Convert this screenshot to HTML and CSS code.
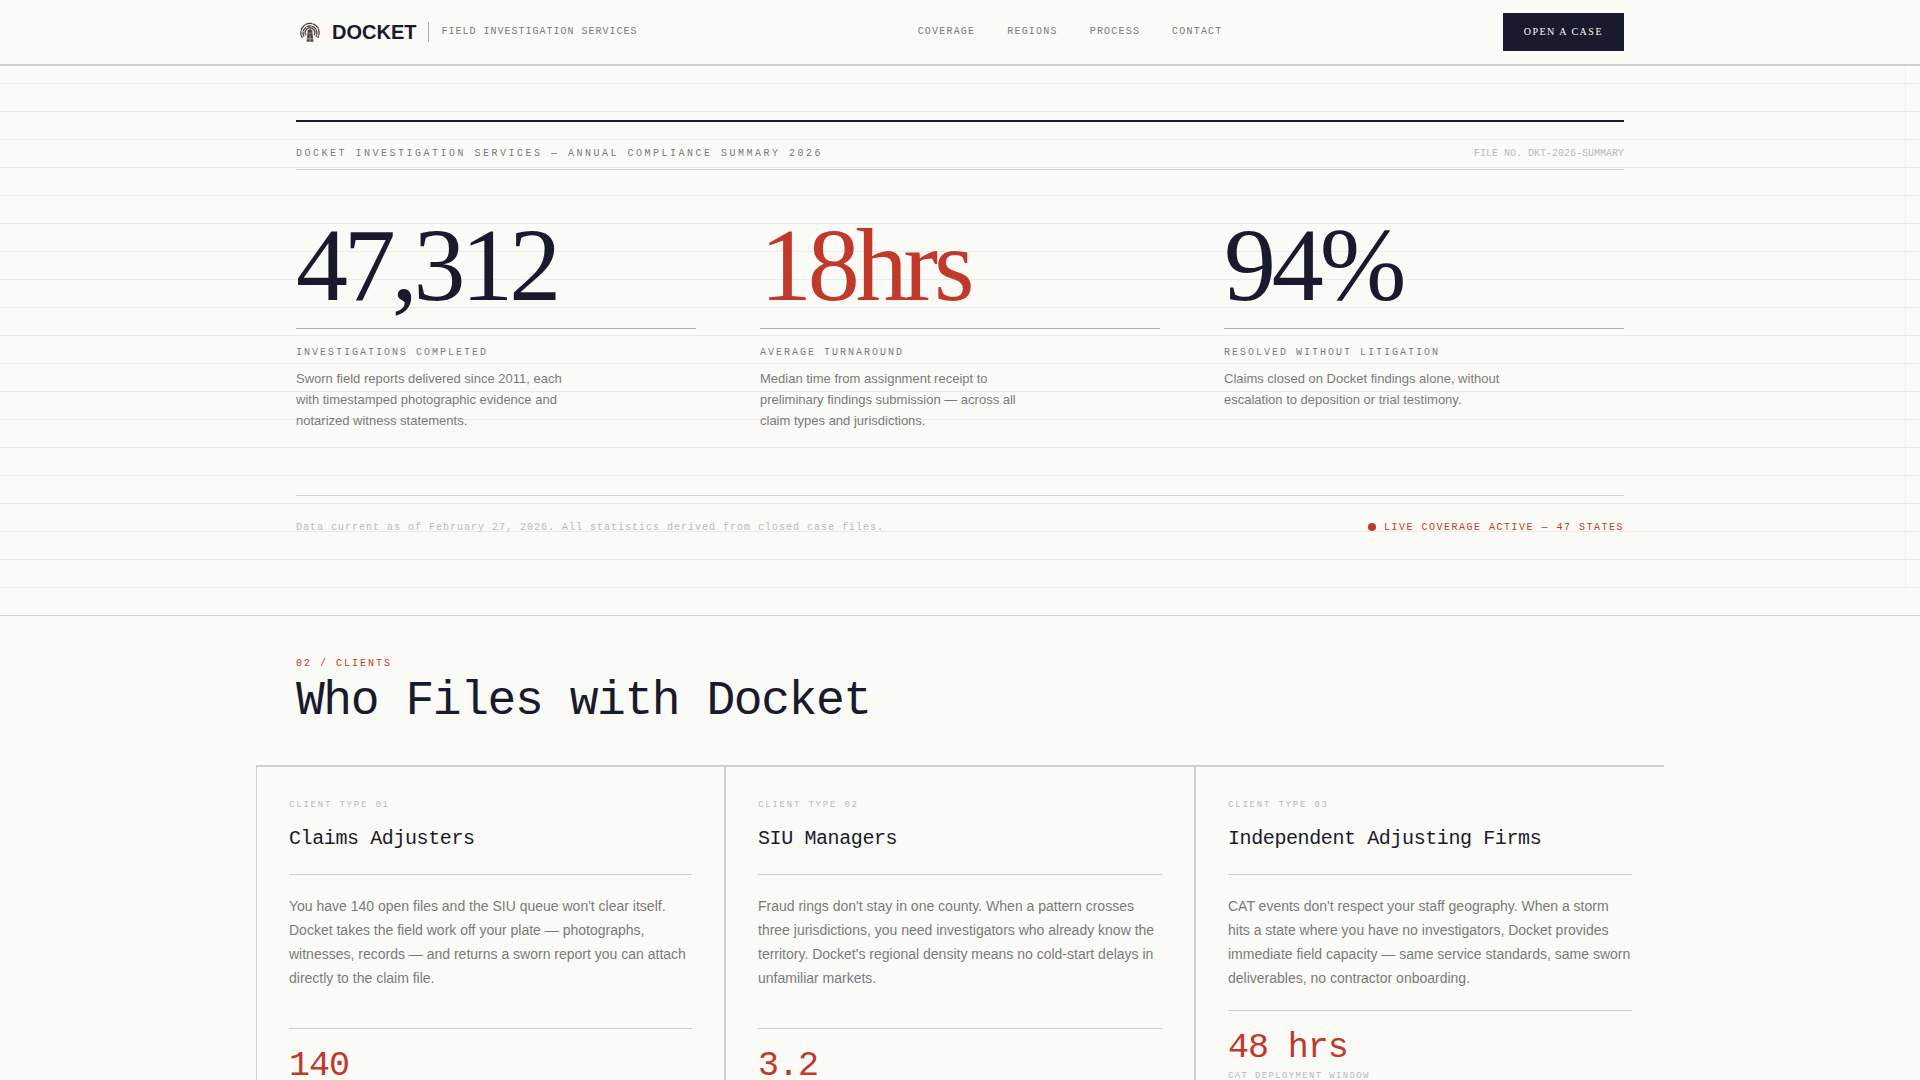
FILE: index.html
```html
<!DOCTYPE html>
<html lang="en">
<head>
<meta charset="utf-8">
<meta name="viewport" content="width=device-width, initial-scale=1">
<title>Docket — Field Investigation Services</title>
<link rel="stylesheet" href="styles.css">
</head>
<body>
<header class="site-header">
  <div class="container site-header__inner">
    <div class="brand">
      <a class="brand__link" href="#top">
        <svg class="brand__mark" viewBox="0 0 28 28" fill="none" aria-hidden="true">
          <g stroke="currentColor" stroke-width="1.3">
            <path d="M6.4 19.8A9.2 9.2 0 1 1 21.6 19.8" stroke-dasharray="7 .5"/>
            <path d="M8 18.6A7 7 0 1 1 20 18.6" stroke-dasharray="5 .5"/>
            <path d="M9.9 17.2A4.8 4.8 0 1 1 18.1 17.2"/>
          </g>
          <path fill="currentColor" d="M14 11.2a2.6 2.6 0 0 1 2.4 3.6l.8 6.4.2 2.6h-6.8l.2-2.6.8-6.4a2.6 2.6 0 0 1 2.4-3.6z"/>
          <path stroke="#fafaf7" stroke-width=".6" d="M12.6 15.2h2.8M11 20.8h6M14 17.5v2.2M14 21.4v2.4"/>
        </svg>
        <span class="brand__name">DOCKET</span>
      </a>
      <span class="brand__tag">FIELD INVESTIGATION SERVICES</span>
    </div>
    <nav class="site-nav" aria-label="Main">
      <a href="#coverage">COVERAGE</a>
      <a href="#regions">REGIONS</a>
      <a href="#process">PROCESS</a>
      <a href="#contact">CONTACT</a>
    </nav>
    <button class="case-button" type="button">OPEN A CASE</button>
  </div>
</header>

<main id="top">
  <section class="hero">
    <div class="container">
      <div class="summary-head">
        <span class="summary-head__title">DOCKET INVESTIGATION SERVICES — ANNUAL COMPLIANCE SUMMARY 2026</span>
        <span class="summary-head__file">FILE NO. DKT-2026-SUMMARY</span>
      </div>
      <div class="stats">
        <article class="stat">
          <div class="stat__value">47,312</div>
          <h2 class="stat__label">INVESTIGATIONS COMPLETED</h2>
          <p class="stat__text">Sworn field reports delivered since 2011, each with timestamped photographic evidence and notarized witness statements.</p>
        </article>
        <article class="stat">
          <div class="stat__value stat__value--accent">18hrs</div>
          <h2 class="stat__label">AVERAGE TURNAROUND</h2>
          <p class="stat__text">Median time from assignment receipt to preliminary findings submission — across all claim types and jurisdictions.</p>
        </article>
        <article class="stat">
          <div class="stat__value">94%</div>
          <h2 class="stat__label">RESOLVED WITHOUT LITIGATION</h2>
          <p class="stat__text">Claims closed on Docket findings alone, without escalation to deposition or trial testimony.</p>
        </article>
      </div>
      <div class="summary-foot">
        <span class="summary-foot__note">Data current as of February 27, 2026. All statistics derived from closed case files.</span>
        <span class="live">LIVE COVERAGE ACTIVE — 47 STATES</span>
      </div>
    </div>
  </section>

  <section class="clients">
    <div class="container clients__head">
      <span class="clients__index">02 / CLIENTS</span>
      <h2 class="clients__title">Who Files with Docket</h2>
    </div>
    <div class="client-grid">
      <article class="client">
        <span class="client__type">CLIENT TYPE 01</span>
        <h3 class="client__name">Claims Adjusters</h3>
        <p class="client__text">You have 140 open files and the SIU queue won't clear itself. Docket takes the field work off your plate — photographs, witnesses, records — and returns a sworn report you can attach directly to the claim file.</p>
        <div class="client__stat">
          <div class="client__value">140</div>
        </div>
      </article>
      <article class="client">
        <span class="client__type">CLIENT TYPE 02</span>
        <h3 class="client__name">SIU Managers</h3>
        <p class="client__text">Fraud rings don't stay in one county. When a pattern crosses three jurisdictions, you need investigators who already know the territory. Docket's regional density means no cold-start delays in unfamiliar markets.</p>
        <div class="client__stat">
          <div class="client__value">3.2</div>
        </div>
      </article>
      <article class="client">
        <span class="client__type">CLIENT TYPE 03</span>
        <h3 class="client__name">Independent Adjusting Firms</h3>
        <p class="client__text">CAT events don't respect your staff geography. When a storm hits a state where you have no investigators, Docket provides immediate field capacity — same service standards, same sworn deliverables, no contractor onboarding.</p>
        <div class="client__stat">
          <div class="client__value">48 hrs</div>
          <div class="client__unit">CAT DEPLOYMENT WINDOW</div>
        </div>
      </article>
    </div>
  </section>
</main>
</body>
</html>
```
FILE: styles.css
```css
:root {
  --paper: #fafaf7;
  --ink: #1a1a2e;
  --text: #7a7a7a;
  --faint: #bbbbb6;
  --rule: #d0d0cb;
  --rule-strong: #b0b0a8;
  --red: #c0392b;
  --sans: "Liberation Sans", Arial, sans-serif;
  --serif: "Liberation Serif", "Times New Roman", serif;
  --mono: "Liberation Mono", "Courier New", monospace;
}

*,
*::before,
*::after {
  box-sizing: border-box;
}

body {
  margin: 0;
  background: var(--paper);
  color: var(--text);
  font-family: var(--sans);
}

h2,
h3,
p {
  margin: 0;
  font-weight: 400;
}

a {
  color: inherit;
  text-decoration: none;
}

.container {
  max-width: 1408px;
  margin: 0 auto;
  padding: 0 40px;
}

/* Header */

.site-header {
  background: var(--paper);
  border-bottom: 2px solid var(--rule);
}

.site-header__inner {
  display: flex;
  align-items: center;
  justify-content: space-between;
  min-height: 64px;
}

.brand,
.brand__link {
  display: flex;
  align-items: center;
}

.brand {
  gap: 12px;
}

.brand__link {
  gap: 8px;
}

.brand__mark {
  width: 28px;
  height: 28px;
  color: #54413f;
}

.brand__name {
  color: var(--ink);
  font-size: 20px;
  font-weight: 700;
}

.brand__tag {
  padding-left: 12px;
  border-left: 1px solid var(--rule-strong);
  font: 10px/20px var(--mono);
  letter-spacing: 0.1em;
}

.site-nav {
  display: flex;
  gap: 32px;
  font: 10px/20px var(--mono);
  letter-spacing: 0.12em;
}

.case-button {
  padding: 11px 20px;
  border: 1px solid var(--ink);
  background: var(--ink);
  color: var(--paper);
  font: 10px/14px var(--serif);
  letter-spacing: 0.15em;
}

/* Hero */

.hero {
  position: relative;
  padding: 54px 0 80px;
  border-bottom: 1px solid var(--rule);
  background: repeating-linear-gradient(to bottom, transparent 0 27px, #ebebe8 27px 28px) 0 -10px / 100% 588px no-repeat;
}

.hero::after {
  content: "";
  position: absolute;
  top: 0;
  right: 14px;
  bottom: 26px;
  width: 1px;
  background: #f4f0ed;
}

.summary-head,
.summary-foot {
  display: flex;
  justify-content: space-between;
  padding-top: 24px;
  font: 10px/15px var(--mono);
}

.summary-head {
  padding-bottom: 8px;
  border-top: 2px solid var(--ink);
  border-bottom: 1px solid var(--rule);
}

.summary-head__title {
  letter-spacing: 0.25em;
}

.summary-head__file,
.summary-foot__note {
  color: var(--faint);
}

.stats {
  display: grid;
  grid-template-columns: repeat(3, 1fr);
  gap: 64px;
  padding: 48px 0 64px;
}

.stat__value {
  color: var(--ink);
  font: 104px/94px var(--serif);
  letter-spacing: -0.04em;
}

.stat__value--accent {
  color: var(--red);
}

.stat__label {
  margin: 16px 0 8px;
  padding-top: 16px;
  border-top: 1px solid var(--rule-strong);
  font: 10px/15px var(--mono);
  letter-spacing: 0.2em;
}

.stat__text {
  max-width: 280px;
  font-size: 13px;
  line-height: 21px;
}

.summary-foot {
  border-top: 1px solid var(--rule);
}

.summary-foot__note {
  letter-spacing: 0.1em;
}

.live {
  display: flex;
  align-items: flex-start;
  gap: 8px;
  color: var(--red);
  letter-spacing: 0.15em;
}

.live::before {
  content: "";
  width: 8px;
  height: 8px;
  margin-top: 3px;
  border-radius: 50%;
  background: var(--red);
}

/* Clients */

.clients__head {
  padding-top: 40px;
  padding-bottom: 40px;
}

.clients__index {
  display: block;
  margin-bottom: 6px;
  color: var(--red);
  font: 10px/15px var(--mono);
  letter-spacing: 0.2em;
}

.clients__title {
  color: var(--ink);
  font: 48px/48px var(--mono);
  letter-spacing: -0.03em;
}

.client-grid {
  display: grid;
  grid-template-columns: repeat(3, 1fr);
  gap: 2px;
  max-width: 1408px;
  margin: 0 auto;
  border-top: 2px solid var(--rule);
  background: var(--rule);
}

.client {
  display: flex;
  flex-direction: column;
  padding: 32px;
  background: var(--paper);
}

.client:first-child {
  border-left: 1px solid var(--rule);
}

.client__type {
  color: var(--faint);
  font: 9px/13px var(--mono);
  letter-spacing: 0.2em;
}

.client__name {
  margin-top: 12px;
  padding-bottom: 20px;
  border-bottom: 1px solid var(--rule);
  color: var(--ink);
  font: 20px/30px var(--mono);
  letter-spacing: -0.02em;
}

.client__text {
  padding: 19px 0 20px;
  font-size: 14px;
  line-height: 24px;
}

.client__stat {
  margin-top: auto;
  padding-top: 20px;
  border-top: 1px solid var(--rule);
}

.client__value {
  padding-bottom: 2px;
  color: var(--red);
  font: 35px/34px var(--mono);
  letter-spacing: -0.03em;
}

.client__unit {
  color: var(--faint);
  font: 9px/18px var(--mono);
  letter-spacing: 0.15em;
}
```
